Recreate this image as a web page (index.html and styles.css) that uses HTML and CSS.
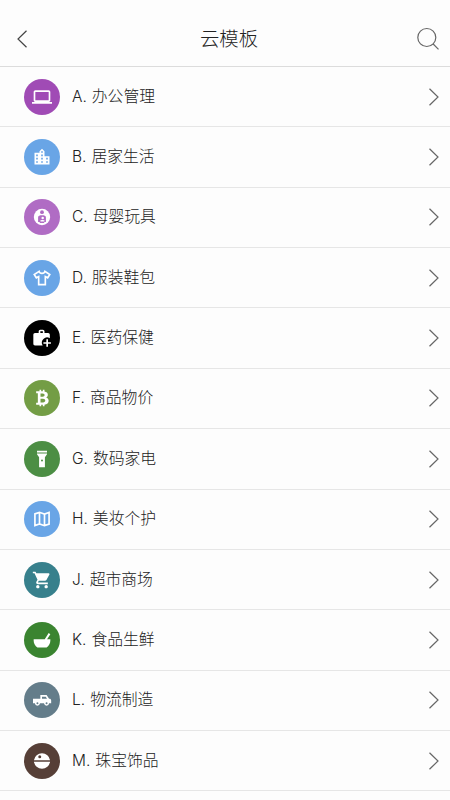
FILE: index.html
```html
<!DOCTYPE html>
<html lang="zh-CN">
<head>
<meta charset="utf-8">
<title>云模板</title>
<link rel="stylesheet" href="styles.css">
</head>
<body>
<header class="bar">
  <svg class="back" viewBox="0 0 12 20"><path d="M10.500 1.700 2 10l8.500 8.300"/></svg>
  <h1 class="title">云模板</h1>
  <svg class="search" viewBox="0 0 24 24"><circle cx="10.800" cy="10.500" r="9"/><path d="m17.200 17 5.300 5.300"/></svg>
</header>
<main class="list">
  <div class="row"><span class="badge purple"><svg viewBox="0 0 24 24"><path fill-rule="evenodd" d="M20 18c1.100 0 1.990-.9 1.990-2L22 6c0-1.100-.9-2-2-2H4c-1.100 0-2 .9-2 2v10c0 1.100.9 2 2 2H0v2h24v-2h-4zM4 6h16v10H4V6z"/></svg></span><span class="letter">A.</span><span class="name">办公管理</span><svg class="arrow" viewBox="0 0 12 20"><path d="m1.500 1.700 8.500 8.300-8.500 8.300"/></svg></div>
  <div class="row"><span class="badge blue"><svg viewBox="0 0 24 24"><path d="M15 11V5l-3-3-3 3v2H3v14h18V11h-6zm-8 8H5v-2h2v2zm0-4H5v-2h2v2zm0-4H5V9h2v2zm6 8h-2v-2h2v2zm0-4h-2v-2h2v2zm0-4h-2V9h2v2zm0-4h-2V5h2v2zm6 12h-2v-2h2v2zm0-4h-2v-2h2v2z"/></svg></span><span class="letter">B.</span><span class="name">居家生活</span><svg class="arrow" viewBox="0 0 12 20"><path d="m1.500 1.700 8.500 8.300-8.500 8.300"/></svg></div>
  <div class="row"><span class="badge violet"><svg viewBox="0 0 24 24"><circle cx="12" cy="12" r="9.800"/><g class="cut"><circle cx="12" cy="6.200" r="2.300"/><path d="M7.300 18v-5.500C7.300 10.600 9.300 10 12 10s4.700.6 4.700 2.500V18h-2v1.300H9.300V18z"/></g><circle cx="12.800" cy="13.300" r="1.500"/><path d="M10.200 17.500v-1.200c0-.9 4.600-.9 4.600 0v1.200z"/></svg></span><span class="letter">C.</span><span class="name">母婴玩具</span><svg class="arrow" viewBox="0 0 12 20"><path d="m1.500 1.700 8.500 8.300-8.500 8.300"/></svg></div>
  <div class="row"><span class="badge blue"><svg viewBox="0 0 24 24"><path class="line" d="M8.500 4 2.700 7.800l2.500 4L8 10.300V20h8v-9.700l2.800 1.500 2.500-4L15.500 4c-.8 3.300-6.200 3.300-7 0z"/></svg></span><span class="letter">D.</span><span class="name">服装鞋包</span><svg class="arrow" viewBox="0 0 12 20"><path d="m1.500 1.700 8.500 8.300-8.500 8.300"/></svg></div>
  <div class="row"><span class="badge black"><svg viewBox="0 0 24 24"><path fill-rule="evenodd" d="M3.600 6H8V4c0-1.100.9-2 2-2h3c1.100 0 2 .9 2 2v2h4.400c1.100 0 2 .9 2 2v4.300a6.300 6.300 0 0 0-8.600 8.700H3.600c-1.100 0-2-.9-2-2V8c0-1.100.9-2 2-2zM10 4v2h3V4z"/><path class="line" d="M18.200 13.500v9M13.700 18h9"/></svg></span><span class="letter">E.</span><span class="name">医药保健</span><svg class="arrow" viewBox="0 0 12 20"><path d="m1.500 1.700 8.500 8.300-8.500 8.300"/></svg></div>
  <div class="row"><span class="badge lime"><svg viewBox="0 0 24 24"><path fill-rule="evenodd" d="M5 4h4V2h2v2h2V2h2v2.100c2.500.4 4 1.800 4 4 0 1.600-.8 2.700-2 3.300 1.900.6 3 2 3 4 0 2.600-1.900 4.300-5 4.600v2h-2v-2h-2v2H9v-2H5v-2.300h2V6.300H5zm5.200 2.700v3.800h2.500c3.200 0 3.200-3.800 0-3.800zm0 6.200v4.400h3c3.600 0 3.600-4.400 0-4.400z"/></svg></span><span class="letter">F.</span><span class="name">商品物价</span><svg class="arrow" viewBox="0 0 12 20"><path d="m1.500 1.700 8.500 8.300-8.500 8.300"/></svg></div>
  <div class="row"><span class="badge green"><svg viewBox="0 0 24 24"><path fill-rule="evenodd" d="M6 2h12v2.200H6zM6 5.400h12v1L15.500 10v12h-7V10L6 6.400zM12 12.700a1.200 1.200 0 1 0 0 2.400 1.200 1.200 0 0 0 0-2.400z"/></svg></span><span class="letter">G.</span><span class="name">数码家电</span><svg class="arrow" viewBox="0 0 12 20"><path d="m1.500 1.700 8.500 8.300-8.500 8.300"/></svg></div>
  <div class="row"><span class="badge blue"><svg viewBox="0 0 24 24"><path class="line" d="M3.500 5.800 9 4l6 2 5.500-1.800v14L15 20l-6-2-5.500 1.800zM9 4v14M15 6v14"/></svg></span><span class="letter">H.</span><span class="name">美妆个护</span><svg class="arrow" viewBox="0 0 12 20"><path d="m1.500 1.700 8.500 8.300-8.500 8.300"/></svg></div>
  <div class="row"><span class="badge teal"><svg viewBox="0 0 24 24"><path d="M7 18c-1.100 0-1.990.9-1.990 2S5.900 22 7 22s2-.9 2-2-.9-2-2-2zM1 2v2h2l3.600 7.590-1.350 2.450c-.16.280-.25.610-.25.960 0 1.100.9 2 2 2h12v-2H7.420c-.14 0-.25-.11-.25-.25l.03-.12.900-1.630h7.450c.75 0 1.410-.41 1.750-1.030l3.580-6.490c.08-.14.120-.31.120-.48 0-.55-.45-1-1-1H5.210l-.94-2H1zm16 16c-1.100 0-1.990.9-1.990 2s.89 2 1.990 2 2-.9 2-2-.9-2-2-2z"/></svg></span><span class="letter">J.</span><span class="name">超市商场</span><svg class="arrow" viewBox="0 0 12 20"><path d="m1.500 1.700 8.500 8.300-8.500 8.300"/></svg></div>
  <div class="row"><span class="badge leaf"><svg viewBox="0 0 24 24"><path d="M2 11h13.300l4.700-7.300 2 1.300-3.900 6H22v1.800c0 3.200-1.800 6.200-4.500 8.200h-11C3.800 19 2 16 2 12.800z"/></svg></span><span class="letter">K.</span><span class="name">食品生鲜</span><svg class="arrow" viewBox="0 0 12 20"><path d="m1.500 1.700 8.500 8.300-8.500 8.300"/></svg></div>
  <div class="row"><span class="badge slate"><svg viewBox="0 0 24 24"><path fill-rule="evenodd" d="M1.200 10.500H10V6h7.500l3 4.500h.5c1.100 0 2 .8 2 2V16H1.200zM12 8v2.500h6L16.500 8z"/><circle cx="6.500" cy="16" r="2.900"/><circle cx="17.500" cy="16" r="2.900"/><circle class="hub" cx="6.500" cy="16" r="1.200"/><circle class="hub" cx="17.500" cy="16" r="1.200"/></svg></span><span class="letter">L.</span><span class="name">物流制造</span><svg class="arrow" viewBox="0 0 12 20"><path d="m1.500 1.700 8.500 8.300-8.500 8.300"/></svg></div>
  <div class="row"><span class="badge brown"><svg viewBox="0 0 24 24"><path fill-rule="evenodd" d="M2.300 11.200a9.800 9.800 0 0 1 19.400 0zM9.300 5.200a1.800 1.800 0 1 0 0 3.600 1.800 1.800 0 0 0 0-3.600zM2.300 12.800a9.800 9.800 0 0 0 19.400 0z"/></svg></span><span class="letter">M.</span><span class="name">珠宝饰品</span><svg class="arrow" viewBox="0 0 12 20"><path d="m1.500 1.700 8.500 8.300-8.500 8.300"/></svg></div>
</main>
</body>
</html>
```
FILE: styles.css
```css
* { box-sizing: border-box; }
body {
  margin: 0;
  height: 800px;
  overflow: hidden;
  background: #fdfdfd;
  color: #222;
  font-family: Inter, "Noto Sans CJK SC", sans-serif;
  font-weight: 300;
}
.bar {
  display: flex;
  align-items: center;
  justify-content: space-between;
  height: 67px;
  padding: 11px 10px 0 16px;
  border-bottom: 1px solid #dcdcdc;
}
.title {
  margin: 0 0 0 14px;
  font-size: 19.400px;
  line-height: 28px;
  font-weight: 300;
}
svg { display: block; }
.back, .arrow, .search {
  fill: none;
  stroke: #666;
  stroke-width: 1.200;
}
.back { width: 12px; height: 20px; stroke: #444; }
.search { width: 24px; height: 24px; }
.arrow { width: 12px; height: 20px; margin-left: auto; }
.row {
  display: flex;
  align-items: center;
  height: 60.360px;
  padding: 0 10.500px 0 24px;
  border-bottom: 1px solid #e6e6e6;
  font-size: 15.800px;
  line-height: 24px;
}
.badge {
  display: grid;
  place-items: center;
  width: 36px;
  height: 36px;
  margin-right: 12px;
  border-radius: 50%;
}
.badge svg { width: 20px; height: 20px; fill: #fff; }
.badge .line { fill: none; stroke: #fff; stroke-width: 2; }
.letter { margin-right: 5px; font-size: 15.500px; }
.purple { background: #a04bb5; }
.blue { background: #69a5e6; }
.violet { background: #b06cc4; }
.violet .cut { fill: #b06cc4; }
.black { background: #000; }
.lime { background: #739d45; }
.green { background: #4c8e44; }
.teal { background: #37808c; }
.leaf { background: #3a8430; }
.slate { background: #647d8a; }
.slate .hub { fill: #647d8a; }
.brown { background: #563f37; }
```
